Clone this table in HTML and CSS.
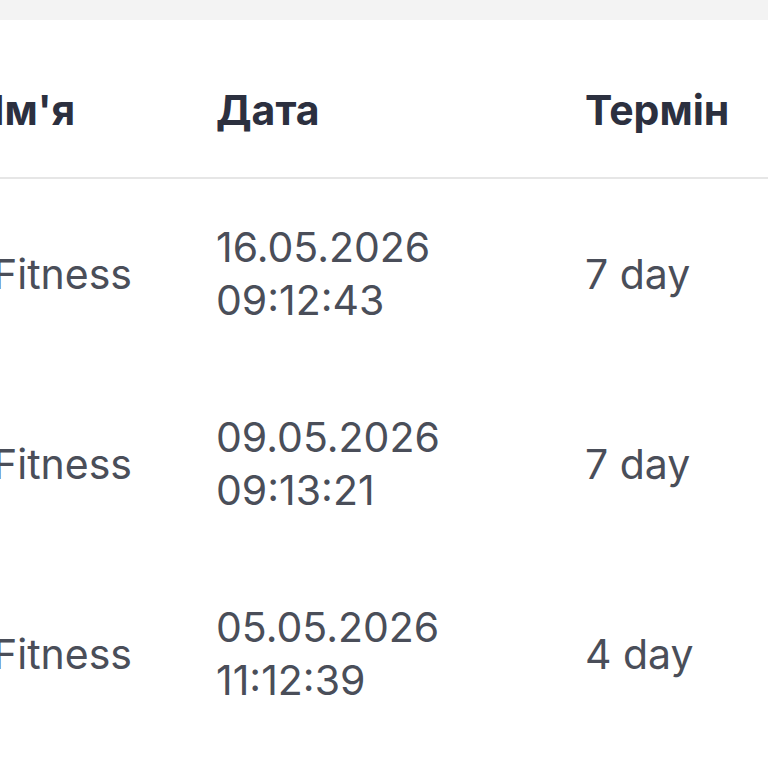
FILE: index.html
```html
<!DOCTYPE html>
<html lang="uk">

<head>
    <meta charset="UTF-8">
    <meta name="viewport" content="width=device-width, initial-scale=1.0">
    <title>Історія</title>
    <link rel="stylesheet" href="styles.css">
</head>

<body>
    <div class="card">
        <table class="history">
            <thead>
                <tr>
                    <th class="col-name">Ім'я</th>
                    <th class="col-date">Дата</th>
                    <th class="col-term">Термін</th>
                </tr>
            </thead>
            <tbody>
                <tr>
                    <td>Fitness</td>
                    <td>16.05.2026<br>09:12:43</td>
                    <td>7 day</td>
                </tr>
                <tr>
                    <td>Fitness</td>
                    <td>09.05.2026<br>09:13:21</td>
                    <td>7 day</td>
                </tr>
                <tr>
                    <td>Fitness</td>
                    <td>05.05.2026<br>11:12:39</td>
                    <td>4 day</td>
                </tr>
            </tbody>
        </table>
    </div>
</body>

</html>
```

FILE: styles.css
```css
body {
    margin: 0;
    background-color: #f3f3f3;
    font-family: Inter, 'Noto Sans', sans-serif;
    overflow: hidden;
}

.card {
    margin-top: 20px;
    background: white;
    min-height: 748px;
}

.history {
    border-collapse: collapse;
    table-layout: fixed;
    width: 820px;
    margin-left: -7px;
}

.col-name {
    width: 223px;
}

.col-date {
    width: 369px;
}

th {
    text-align: left;
    font-size: 41px;
    font-weight: 700;
    line-height: 52px;
    color: #2c303f;
    padding: 64px 0 41px 0;
    border-bottom: 2px solid #e6e6e6;
}

td {
    font-size: 41px;
    line-height: 53px;
    color: #4a4e59;
    padding: 0;
    height: 190px;
    vertical-align: middle;
}
```
